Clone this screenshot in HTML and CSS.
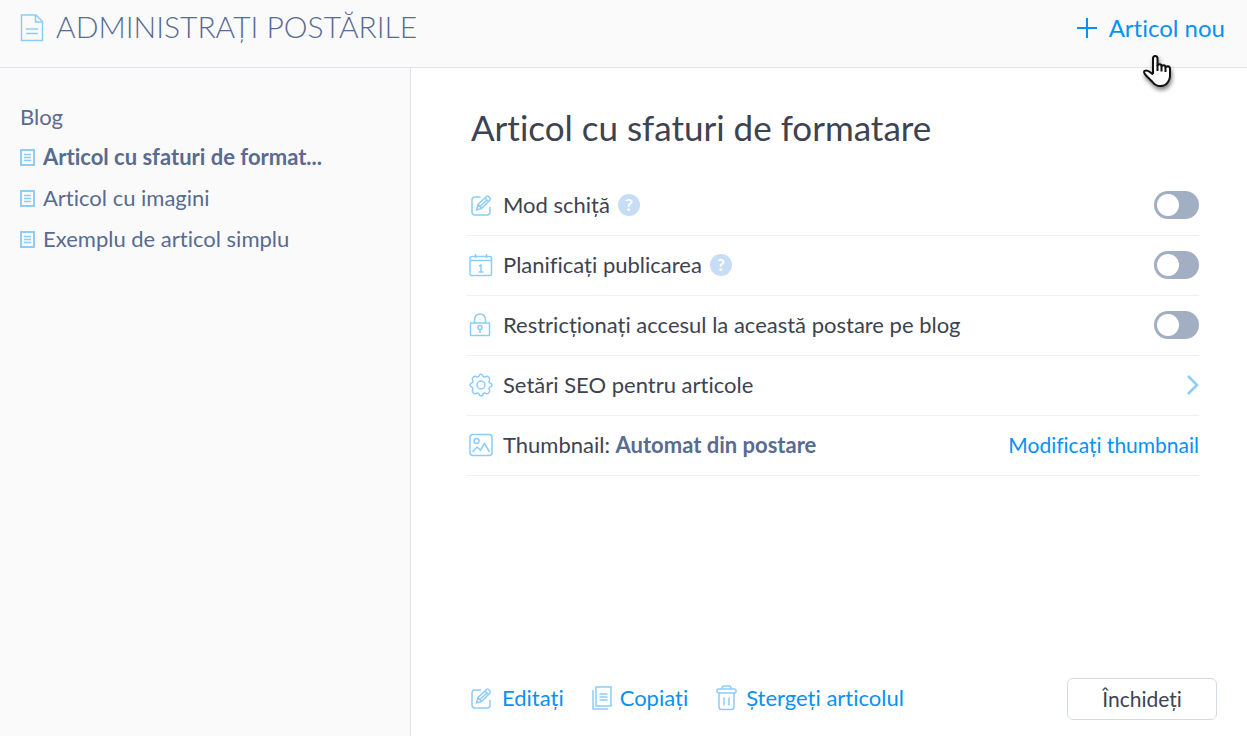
FILE: index.html
```html
<!DOCTYPE html>
<html lang="ro">
<head>
    <meta charset="UTF-8">
    <meta name="viewport" content="width=device-width, initial-scale=1.0">
    <title>Administrați postările</title>
    <link rel="stylesheet" href="styles.css">
</head>
<body>

    <!-- Header -->
    <header class="header">
        <svg class="header-icon" width="24" height="28" viewBox="0 0 24 28">
            <path d="M1.500 1h14.500l6.500 6.500v19h-21z M15.500 1v7h7 M6 15h12 M6 19.500h12"/>
        </svg>
        <h1>ADMINISTRAȚI POSTĂRILE</h1>
        <button type="button" class="btn-new">
            <svg width="20" height="20" viewBox="0 0 20 20"><path d="M10 0v20M0 10h20"/></svg>
            Articol nou
            <svg class="cursor" width="30" height="36" viewBox="0 0 30 36">
                <path d="M10 20V4.500Q10 2 12.200 2Q14.500 2 14.500 4.500V12Q14.500 10.300 16.500 10.300Q18.500 10.300 18.500 12.500Q18.800 11.200 20.500 11.200Q22.500 11.200 22.500 13.500Q23 12.300 24.700 12.300Q27 12.500 27 15V22Q27 25 25 28Q22.500 32 17.500 32Q12.500 32 9.500 28L4 22.500Q0 18.500 1.500 17Q3.500 15.500 6.500 17.800L10 20.500"/>
                <path d="M14.500 11v6M18.500 12v5.500M22.500 13v5"/>
            </svg>
        </button>
    </header>

    <div class="layout">
        <!-- Lista de articole -->
        <nav class="sidebar">
            <h2>Blog</h2>
            <ul>
                <li>
                    <a href="#" class="active">
                        <svg width="15" height="17" viewBox="0 0 15 17"><rect x="1" y="1" width="13" height="15"/><path class="lines" d="M4 5.500h7M4 8.500h7M4 11.500h7"/></svg>
                        <span>Articol cu sfaturi de format...</span>
                    </a>
                </li>
                <li>
                    <a href="#">
                        <svg width="15" height="17" viewBox="0 0 15 17"><rect x="1" y="1" width="13" height="15"/><path class="lines" d="M4 5.500h7M4 8.500h7M4 11.500h7"/></svg>
                        <span>Articol cu imagini</span>
                    </a>
                </li>
                <li>
                    <a href="#">
                        <svg width="15" height="17" viewBox="0 0 15 17"><rect x="1" y="1" width="13" height="15"/><path class="lines" d="M4 5.500h7M4 8.500h7M4 11.500h7"/></svg>
                        <span>Exemplu de articol simplu</span>
                    </a>
                </li>
            </ul>
        </nav>

        <!-- Setările articolului -->
        <main class="content">
            <h2>Articol cu sfaturi de formatare</h2>

            <div class="settings">
                <div class="row">
                    <svg class="icon" width="24" height="24" viewBox="0 0 24 24">
                        <path d="M11.500 4H6Q3 4 3 7v12q0 3 3 3h12q3 0 3-3v-5"/>
                        <path d="M7.500 17l1.500-5.500 8.500-8q1-.8 2 0l1.500 1.500q.8 1 0 2L12.500 15.500zM9 11.500l3.500 4M16 5l4 4M11 13.500l7-6.500"/>
                    </svg>
                    <label for="draft">Mod schiță</label>
                    <button type="button" class="help">?</button>
                    <input type="checkbox" class="toggle" id="draft">
                </div>
                <div class="row">
                    <svg class="icon" width="24" height="24" viewBox="0 0 24 24">
                        <path d="M3 3.500h17.500q2 0 2 2V21q0 1.500-1.500 1.500H2.500Q1 22.500 1 21V5.500q0-2 2-2zM1 7.500h21.500M6.500 1v4M17.500 1v4"/>
                        <path d="M10 13l2-1v7M9.500 19h5"/>
                    </svg>
                    <label for="schedule">Planificați publicarea</label>
                    <button type="button" class="help">?</button>
                    <input type="checkbox" class="toggle" id="schedule">
                </div>
                <div class="row">
                    <svg class="icon" width="24" height="24" viewBox="0 0 24 24">
                        <path d="M1.500 10h19v12.500h-19zM5.500 10V7.500Q5.500 1 11 1t5.500 6.500V10"/>
                        <circle cx="11" cy="14.500" r="2"/>
                        <path d="M11 16.500v3.500"/>
                    </svg>
                    <label for="restrict">Restricționați accesul la această postare pe blog</label>
                    <input type="checkbox" class="toggle" id="restrict">
                </div>
                <div class="row">
                    <svg class="icon" width="24" height="24" viewBox="0 0 24 24">
                        <path d="M10 3.200Q10.500 1 12 1t2 2.200Q15 4.500 17 3.500Q18.500 2.800 19.800 4.200T20.500 7Q19.500 9 21 10Q23 10.500 23 12t-2 2Q19.500 15 20.500 17Q21.200 18.500 19.800 19.800T17 20.500Q15 19.500 14 21Q13.500 23 12 23t-2-2Q9 19.500 7 20.500Q5.500 21.200 4.200 19.800T3.500 17Q4.500 15 3 14Q1 13.500 1 12t2-2Q4.500 9 3.500 7Q2.800 5.500 4.200 4.200T7 3.500Q9 4.500 10 3.200z"/>
                        <circle cx="12" cy="12" r="4"/>
                    </svg>
                    <span>Setări SEO pentru articole</span>
                    <button type="button" class="btn-next" aria-label="Setări SEO pentru articole">
                        <svg width="13" height="20" viewBox="0 0 13 20"><path d="M2 1l9 9-9 9"/></svg>
                    </button>
                </div>
                <div class="row">
                    <svg class="icon" width="24" height="24" viewBox="0 0 24 24">
                        <rect x="1" y="1.500" width="22" height="21" rx="3"/>
                        <circle cx="7.500" cy="8" r="2.500"/>
                        <path d="M3.500 19l4.500-5 3.500 3 4-6.500 5 8.500"/>
                    </svg>
                    <span>Thumbnail: <strong>Automat din postare</strong></span>
                    <a href="#" class="change">Modificați thumbnail</a>
                </div>
            </div>

            <div class="footer">
                <button type="button" class="btn-action">
                    <svg class="icon" width="24" height="24" viewBox="0 0 24 24">
                        <path d="M11 4H5Q2 4 2 7v12q0 3 3 3h12q3 0 3-3v-5"/>
                        <path d="M6.500 17l1.500-5.500 8.500-8q1-.8 2 0l1.500 1.500q.8 1 0 2L11.500 15.500zM8 11.500l3.500 4M15 5l4 4M10 13.500l7-6.500"/>
                    </svg>
                    Editați
                </button>
                <button type="button" class="btn-action">
                    <svg class="icon" width="20" height="24" viewBox="0 0 20 24">
                        <path d="M4 1h15v19H4zM1 4v19h15M7.500 8h8M7.500 11h8M7.500 14h8"/>
                    </svg>
                    Copiați
                </button>
                <button type="button" class="btn-action">
                    <svg class="icon" width="22" height="26" viewBox="0 0 22 26">
                        <rect x="1" y="4" width="19" height="4" rx="1.500"/>
                        <path d="M6 4V3q0-2 2-2h5q2 0 2 2v1M3 8v14q0 2.500 2.500 2.500h10q2.500 0 2.500-2.500V8M8 12.500v8M13 12.500v8"/>
                    </svg>
                    Ștergeți articolul
                </button>
                <button type="button" class="btn-close">Închideți</button>
            </div>
        </main>
    </div>

</body>
</html>
```
FILE: styles.css
```css
* {
    box-sizing: border-box;
}
body {
    font-family: Lato, "Open Sans", sans-serif;
    font-size: 22px;
    line-height: 28px;
    font-variant-ligatures: none;
    color: #3d4350;
    background-color: white;
    margin: 0;
    min-height: 100vh;
    display: flex;
    flex-direction: column;
}
h1, h2, ul {
    margin: 0;
    padding: 0;
    font-weight: normal;
}
button {
    font: inherit;
    font-variant-ligatures: none;
    color: inherit;
    background: none;
    border: none;
    padding: 0;
    cursor: pointer;
}
a {
    text-decoration: none;
}
svg {
    fill: none;
    stroke: #8dcdf8;
    stroke-width: 1.5;
    flex-shrink: 0;
}

/* Header */
.header {
    display: flex;
    align-items: center;
    height: 68px;
    padding: 0 22px 12px 20px;
    background-color: #fafafa;
    border-bottom: 1px solid #dfe5ea;
}
.header h1 {
    margin-left: 12px;
    padding-bottom: 4px;
    font-size: 30px;
    line-height: 36px;
    font-weight: 300;
    color: #586b91;
}
.btn-new {
    position: relative;
    display: flex;
    align-items: center;
    gap: 12px;
    margin-left: auto;
    font-size: 24px;
    line-height: 32px;
    color: #0692f3;
}
.btn-new svg {
    stroke: #0692f3;
    stroke-width: 2;
}
.btn-new .cursor {
    position: absolute;
    right: 52px;
    top: 42px;
    fill: white;
    stroke: #111;
    filter: drop-shadow(1px 3px 2px rgba(0, 0, 0, 0.5));
}

.layout {
    display: flex;
    flex: 1;
}

/* Lista de articole */
.sidebar {
    flex: 0 0 411px;
    padding: 35px 20px;
    background-color: #fafafa;
    border-right: 1px solid #dfe5ea;
    color: #586b91;
}
.sidebar h2 {
    font-size: 22px;
    line-height: 28px;
}
.sidebar ul {
    list-style: none;
}
.sidebar li {
    padding: 12px 0 1px;
}
.sidebar a {
    display: flex;
    align-items: center;
    gap: 8px;
    color: #586b91;
}
.sidebar svg {
    stroke-width: 2;
}
.sidebar .lines {
    stroke-width: 1.5;
}
.sidebar .active {
    font-weight: bold;
}

/* Setările articolului */
.content {
    flex: 1;
    display: flex;
    flex-direction: column;
    padding: 35px 30px 16px 55px;
}
.content h2 {
    padding-left: 5px;
    font-size: 35px;
    line-height: 48px;
}
.settings {
    margin: 25px 18px 0 0;
}
.row {
    display: flex;
    align-items: center;
    height: 60px;
    padding: 0 0 1px 3px;
    border-bottom: 1px solid #eef1f4;
}
.row .icon {
    margin-right: 10px;
}
.row strong {
    color: #586b91;
}
.help {
    width: 22px;
    height: 22px;
    margin-left: 8px;
    border-radius: 50%;
    background-color: #c6ddf5;
    color: white;
    font-size: 17px;
    font-weight: bold;
    line-height: 22px;
}
.toggle {
    appearance: none;
    width: 45px;
    height: 28px;
    margin: 0 0 0 auto;
    padding: 3px;
    border-radius: 14px;
    background-color: #a2aec2;
    cursor: pointer;
}
.toggle::before {
    content: "";
    display: block;
    width: 22px;
    height: 22px;
    border-radius: 50%;
    background-color: white;
}
.toggle:checked {
    background-color: #0692f3;
}
.toggle:checked::before {
    margin-left: auto;
}
.btn-next {
    display: flex;
    margin-left: auto;
}
.btn-next svg {
    stroke-width: 2.5;
}
.change {
    margin-left: auto;
    font-size: 21px;
    color: #0692f3;
}

/* Butoane jos */
.footer {
    display: flex;
    align-items: center;
    gap: 28px;
    margin-top: auto;
    padding-left: 4px;
}
.btn-action {
    display: flex;
    align-items: center;
    gap: 8px;
    padding-bottom: 2px;
    color: #0692f3;
}
.btn-close {
    width: 150px;
    height: 42px;
    margin-left: auto;
    font-size: 21px;
    border: 1px solid #d3dce2;
    border-radius: 6px;
}
```
